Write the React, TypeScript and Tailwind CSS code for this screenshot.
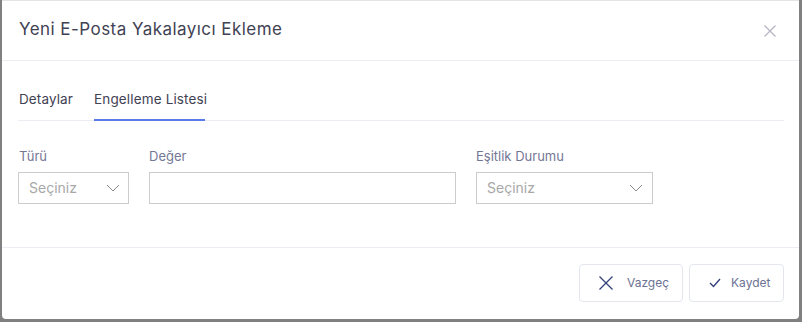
import React from "react";

const font = { fontFamily: "Inter, 'Noto Sans', sans-serif" };

function Chevron() {
  return (
    <svg width="14" height="8" viewBox="0 0 14 8" fill="none">
      <path d="M1 1l6 6 6-6" stroke="#8a8a8a" strokeWidth="1" />
    </svg>
  );
}

export default function App() {
  return (
    <div className="w-[802px] h-[322px] bg-[#808080] overflow-hidden" style={font}>
      <div className="ml-[2px] w-[797px] h-[319px] bg-white rounded-b-[4px] border-t border-[#e4e4e4] flex flex-col">
        <div className="h-[60px] border-b border-[#ebedf3] flex items-center justify-between pl-[17px] pr-[23px]">
          <div className="text-[17px] text-[#3f4254] tracking-[0.45px] pb-[1px] whitespace-nowrap">Yeni E-Posta Yakalayıcı Ekleme</div>
          <svg width="12" height="12" viewBox="0 0 12 12" fill="none">
            <path d="M0.5 0.5l11 11M11.5 0.5l-11 11" stroke="#b5b5c3" strokeWidth="1.3" />
          </svg>
        </div>
        <div className="px-[16px]">
          <div className="flex border-b border-[#ebedf3] mt-[28px] w-[766px] text-[13.5px] text-[#3f4254] whitespace-nowrap">
            <div className="pb-[11px] w-[76px] pl-[1px] tracking-[0.1px]">Detaylar</div>
            <div className="pb-[9px] border-b-2 border-[#5b7bec] -mb-[1px] w-[111px] tracking-[0.15px]">Engelleme Listesi</div>
          </div>
          <div className="flex mt-[26px] text-[13px] text-[#747796] whitespace-nowrap">
            <div className="w-[111px] mr-[20px]">
              <div className="mb-[5px] pl-[1px]">Türü</div>
              <div className="h-[32px] border border-[#cccccc] flex items-center justify-between pl-[10px] pr-[8px] text-[14px] text-[#a8a8a8]">
                <span>Seçiniz</span>
                <Chevron />
              </div>
            </div>
            <div className="w-[307px] mr-[20px]">
              <div className="mb-[5px]">Değer</div>
              <div className="h-[32px] border border-[#cccccc]" />
            </div>
            <div className="w-[177px]">
              <div className="mb-[5px]">Eşitlik Durumu</div>
              <div className="h-[32px] border border-[#cccccc] flex items-center justify-between pl-[10px] pr-[9px] text-[14px] text-[#a8a8a8]">
                <span>Seçiniz</span>
                <Chevron />
              </div>
            </div>
          </div>
        </div>
        <div className="mt-[43px] border-t border-[#ebedf3] flex justify-end pt-[16px] pr-[15px] gap-[6px]">
          <button className="w-[104px] h-[38px] border border-[#e4e6ef] rounded-[4px] flex items-center pl-[19px] text-[12px] text-[#6c7293]">
            <svg width="14" height="14" viewBox="0 0 14 14" fill="none" className="mr-[14px]">
              <path d="M0.5 0.5l13 13M13.5 0.5l-13 13" stroke="#33407a" strokeWidth="1.3" />
            </svg>
            Vazgeç
          </button>
          <button className="w-[95px] h-[38px] border border-[#e4e6ef] rounded-[4px] flex items-center pl-[19px] text-[12px] text-[#6c7293]">
            <svg width="12" height="10" viewBox="0 0 12 10" fill="none" className="mr-[10px]">
              <path d="M1 5l3.5 3.5L11 1" stroke="#33407a" strokeWidth="1.4" />
            </svg>
            Kaydet
          </button>
        </div>
      </div>
    </div>
  );
}
